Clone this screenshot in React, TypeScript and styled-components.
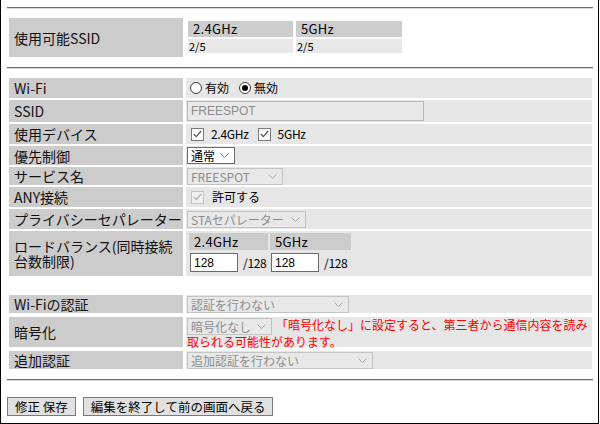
import React from 'react'
import { createGlobalStyle, styled } from 'styled-components'

const GlobalStyle = createGlobalStyle`
  html, body {
    margin: 0;
    padding: 0;
    background: #fff;
  }
  body {
    font-family: 'Noto Sans CJK JP', 'Liberation Sans', sans-serif;
    color: #000;
  }
`

const Chevron = ({ color = '#8a8a8a' }: { color?: string }) => (
  <svg width='9' height='5' viewBox='0 0 9 5'>
    <polyline points='0.5,0.5 4.5,4.5 8.5,0.5' fill='none' stroke={color} strokeWidth='1' />
  </svg>
)

const Select = ({ text, width, disabled = true }: { text: string; width: number; disabled?: boolean }) => (
  <SelectBox $w={width} $disabled={disabled}>
    <SelectText>{text}</SelectText>
    <Chevron color={disabled ? '#a8a8a8' : '#777'} />
  </SelectBox>
)

const Check = ({ disabled }: { disabled?: boolean }) => (
  <CheckBox $disabled={disabled}>
    <svg width='9' height='8' viewBox='0 0 9 8'>
      <polyline
        points='0.8,4 3.3,6.6 8.2,1'
        fill='none'
        stroke={disabled ? '#b0b0b0' : '#555'}
        strokeWidth='1.2'
      />
    </svg>
  </CheckBox>
)

const App = () => {
  return (
    <>
      <GlobalStyle />
      <Frame>
        <Rule />

        <FormGrid $rows='39px' $gap={0} $top={9}>
          <Label>使用可能SSID</Label>
          <Value $plain $top>
            <BandGrid $cols='105px 106px' $colGap={3} $rowGap={2}>
              <BandHead $h={16}>2.4GHz</BandHead>
              <BandHead $h={16}>5GHz</BandHead>
              <BandCount>2/5</BandCount>
              <BandCount>2/5</BandCount>
            </BandGrid>
          </Value>
        </FormGrid>

        <Rule $top={10} />

        <FormGrid $rows='20px 22px 20px 19px 18px 20px 20px 45px' $gap={2} $top={9}>
          <Label>Wi-Fi</Label>
          <Value>
            <Choices $gap={10} $left={3}>
              <Choice $gap={3}>
                <Radio />
                有効
              </Choice>
              <Choice $gap={3}>
                <Radio $on />
                無効
              </Choice>
            </Choices>
          </Value>

          <Label>SSID</Label>
          <Value>
            <TextField $w={237} $h={20} $disabled disabled value='FREESPOT' readOnly />
          </Value>

          <Label>使用デバイス</Label>
          <Value>
            <Choices $gap={9} $left={4}>
              <Choice $gap={7}>
                <Check />
                <MonoText>2.4GHz</MonoText>
              </Choice>
              <Choice $gap={7}>
                <Check />
                <MonoText>5GHz</MonoText>
              </Choice>
            </Choices>
          </Value>

          <Label>優先制御</Label>
          <Value>
            <Select text='通常' width={48} disabled={false} />
          </Value>

          <Label>サービス名</Label>
          <Value>
            <Select text='FREESPOT' width={96} />
          </Value>

          <Label>ANY接続</Label>
          <Value>
            <Choices $gap={0} $left={4}>
              <Choice $gap={8}>
                <Check disabled />
                許可する
              </Choice>
            </Choices>
          </Value>

          <Label>プライバシーセパレーター</Label>
          <Value>
            <Select text='STAセパレーター' width={119} />
          </Value>

          <Label $wrap>
            ロードバランス(同時接続
            <br />
            台数制限)
          </Label>
          <Value $top $pad='2px 0 0 3px'>
            <BandGrid $cols='79px 81px' $colGap={2} $rowGap={3}>
              <BandHead $h={17}>2.4GHz</BandHead>
              <BandHead $h={17}>5GHz</BandHead>
              <LimitCell>
                <TextField $w={48} $h={19} value='128' readOnly />
                <MonoText>/128</MonoText>
              </LimitCell>
              <LimitCell>
                <TextField $w={48} $h={19} value='128' readOnly />
                <MonoText>/128</MonoText>
              </LimitCell>
            </BandGrid>
          </Value>
        </FormGrid>

        <FormGrid $rows='18px 30px 18px' $gap={4} $top={19}>
          <Label>Wi-Fiの認証</Label>
          <Value>
            <Select text='認証を行わない' width={162} />
          </Value>

          <Label>暗号化</Label>
          <FlowValue>
            <Select text='暗号化なし' width={85} />
            <Warning>
              「暗号化なし」に設定すると、第三者から通信内容を読み取られる可能性があります。
            </Warning>
          </FlowValue>

          <Label>追加認証</Label>
          <Value>
            <Select text='追加認証を行わない' width={186} />
          </Value>
        </FormGrid>

        <Rule $top={10} />

        <ButtonBar>
          <Button>修正 保存</Button>
          <Button>編集を終了して前の画面へ戻る</Button>
        </ButtonBar>
      </Frame>
    </>
  )
}

const Frame = styled.div`
  width: 599px;
  height: 424px;
  box-sizing: border-box;
  border: 1px solid #000;
  border-top: none;
  padding: 7px 0 0 6px;
  overflow: hidden;
`

const Rule = styled.hr<{ $top?: number }>`
  margin: ${props => props.$top ?? 0}px 0 0 0;
  width: 586px;
  height: 0;
  border: none;
  border-top: 1px solid #6e6e6e;
  border-bottom: 1px solid #d6d6d6;
`

const FormGrid = styled.div<{ $rows: string; $gap: number; $top: number }>`
  display: grid;
  grid-template-columns: 174px 406px;
  grid-template-rows: ${props => props.$rows};
  column-gap: 3px;
  row-gap: ${props => props.$gap}px;
  margin: ${props => props.$top}px 0 0 2px;
`

const Label = styled.div<{ $wrap?: boolean }>`
  background: #ccc;
  display: flex;
  align-items: center;
  box-sizing: border-box;
  padding: 0 0 0 5px;
  font-size: 14px;
  line-height: ${props => (props.$wrap ? '15px' : '16px')};
  color: #111;
  white-space: nowrap;
`

const Value = styled.div<{ $plain?: boolean; $top?: boolean; $pad?: string }>`
  background: ${props => (props.$plain ? '#fff' : '#e6e6e6')};
  display: flex;
  align-items: ${props => (props.$top ? 'flex-start' : 'center')};
  box-sizing: border-box;
  padding: ${props => props.$pad ?? (props.$top ? '3px 0 0 2px' : '0 0 0 1px')};
  font-size: 12px;
  line-height: 14px;
`

const FlowValue = styled.div`
  background: #e6e6e6;
  box-sizing: border-box;
  padding: 1px 0 0 1px;
  font-size: 12px;
  line-height: 14px;
`

const BandGrid = styled.div<{ $cols: string; $colGap: number; $rowGap: number }>`
  display: grid;
  grid-template-columns: ${props => props.$cols};
  column-gap: ${props => props.$colGap}px;
  row-gap: ${props => props.$rowGap}px;
`

const BandHead = styled.div<{ $h: number }>`
  background: #ccc;
  height: ${props => props.$h}px;
  line-height: ${props => props.$h}px;
  padding-left: 5px;
  font-size: 13px;
  letter-spacing: 0.3px;
`

const BandCount = styled.div`
  background: #e8e8e8;
  height: 14px;
  line-height: 14px;
  padding-left: 1px;
  font-size: 11px;
`

const LimitCell = styled.div`
  display: flex;
  align-items: center;
  gap: 5px;
  padding-left: 1px;
`

const MonoText = styled.span`
  font-size: 12px;
  letter-spacing: -0.3px;
`

const Choices = styled.div<{ $gap: number; $left: number }>`
  display: flex;
  align-items: center;
  gap: ${props => props.$gap}px;
  margin-left: ${props => props.$left}px;
`

const Choice = styled.label<{ $gap: number }>`
  display: flex;
  align-items: center;
  gap: ${props => props.$gap}px;
  font-size: 12px;
`

const Radio = styled.span<{ $on?: boolean }>`
  width: 12px;
  height: 12px;
  box-sizing: border-box;
  border-radius: 50%;
  border: 1px solid #3c3c3c;
  background: #fff;
  display: inline-flex;
  align-items: center;
  justify-content: center;

  &::after {
    content: '';
    width: 6px;
    height: 6px;
    border-radius: 50%;
    background: #000;
    display: ${props => (props.$on ? 'block' : 'none')};
  }
`

const CheckBox = styled.span<{ $disabled?: boolean }>`
  width: 13px;
  height: 13px;
  box-sizing: border-box;
  border: 1px solid ${props => (props.$disabled ? '#c2c2c2' : '#7a7a7a')};
  background: ${props => (props.$disabled ? '#f0f0f0' : '#fff')};
  display: inline-flex;
  align-items: center;
  justify-content: center;
`

const TextField = styled.input<{ $w: number; $h: number; $disabled?: boolean }>`
  width: ${props => props.$w}px;
  height: ${props => props.$h}px;
  box-sizing: border-box;
  margin: 0;
  padding: 0 0 0 3px;
  border: 1px solid ${props => (props.$disabled ? '#b8b8b8' : '#6a6a6a')};
  background: ${props => (props.$disabled ? '#e8e8e8' : '#fff')};
  color: ${props => (props.$disabled ? '#8c8c8c' : '#000')};
  font-family: 'Liberation Sans', sans-serif;
  font-size: 12px;
  outline: none;
`

const SelectBox = styled.span<{ $w: number; $disabled?: boolean }>`
  width: ${props => props.$w}px;
  height: 17px;
  box-sizing: border-box;
  display: inline-flex;
  align-items: center;
  justify-content: space-between;
  vertical-align: top;
  overflow: hidden;
  padding: 0 5px 0 3px;
  border: 1px solid ${props => (props.$disabled ? '#c4c4c4' : '#6b6b6b')};
  background: ${props => (props.$disabled ? '#e8e8e8' : '#fff')};
  color: ${props => (props.$disabled ? '#8d8d8d' : '#000')};
  font-size: 12px;
  white-space: nowrap;
`

const SelectText = styled.span`
  display: block;
  height: 15px;
  line-height: 15px;
  overflow: hidden;
`

const Warning = styled.span`
  color: #f00;
  margin-left: 4px;
  font-size: 12px;
  line-height: 14px;
`

const ButtonBar = styled.div`
  display: flex;
  gap: 7px;
  margin-top: 16px;
`

const Button = styled.button`
  height: 19px;
  box-sizing: border-box;
  margin: 0;
  padding: 0 7px;
  border: 1px solid #7a7a7a;
  background: #e1e1e1;
  font-family: 'Noto Sans CJK JP', sans-serif;
  font-size: 12.5px;
  line-height: 16px;
  color: #000;
  white-space: nowrap;
`

export default App
